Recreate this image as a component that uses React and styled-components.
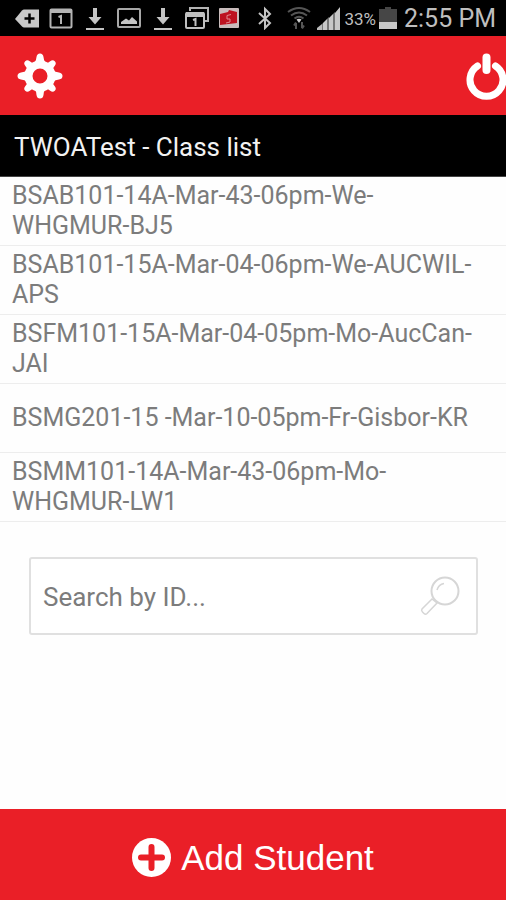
import React from "react";
import styled, { createGlobalStyle } from "styled-components";

const GlobalStyle = createGlobalStyle`
  *, *::before, *::after { box-sizing: border-box; }
  body {
    margin: 0;
    background: #fefefe;
    font-family: Roboto, "Noto Sans", sans-serif;
  }
`;

const Screen = styled.div`
  display: flex;
  flex-direction: column;
  min-height: 100vh;
`;

const StatusBar = styled.div`
  display: flex;
  align-items: center;
  justify-content: space-between;
  height: 36px;
  padding: 0 10px 0 15px;
  background: #000;
  color: #bebebe;
`;

const StatusGroup = styled.div`
  display: flex;
  align-items: center;
  gap: ${(p) => p.$gap}px;
`;

const StatusIcon = styled.svg`
  display: block;
  flex: none;
  width: ${(p) => p.$width || 24}px;
  height: 24px;
`;

const BatteryLevel = styled.span`
  padding-top: 2px;
  font-size: 17px;
`;

const Clock = styled.time`
  padding: 2px 0 0 4px;
  font-size: 25px;
  line-height: 34px;
  white-space: nowrap;
`;

const Toolbar = styled.header`
  display: flex;
  align-items: center;
  justify-content: space-between;
  height: 79px;
  padding-left: 17px;
  background: #ea1f27;
`;

const IconButton = styled.button`
  display: block;
  padding: 0;
  border: 0;
  background: none;
  color: ${(p) => p.$color || "#fff"};
  cursor: pointer;

  svg { display: block; }
`;

const Title = styled.h1`
  margin: 0;
  padding: 4px 14px 0;
  border-bottom: 1px solid #444;
  background: #000;
  color: #f2f2f2;
  font-size: 26px;
  font-weight: 400;
  line-height: 57px;
`;

const ClassList = styled.ul`
  margin: 0;
  padding: 0;
  list-style: none;
`;

const ClassRow = styled.li`
  display: flex;
  align-items: center;
  min-height: 69px;
  padding: 4px 24px 4px 12px;
  border-bottom: 1px solid #ededed;
  color: #7c7c7c;
  font-size: 25px;
  line-height: 30px;
`;

const SearchBox = styled.form`
  display: flex;
  align-items: center;
  height: 78px;
  margin: 35px 28px 0 29px;
  padding: 0 15px 0 12px;
  border: 2px solid #e0e0e0;
  border-radius: 3px;
  background: #fff;
`;

const SearchInput = styled.input`
  flex: 1;
  min-width: 0;
  padding: 2px 0 0;
  border: 0;
  outline: 0;
  background: none;
  color: #7c7c7c;
  font: 26px/36px Roboto, "Noto Sans", sans-serif;

  &::placeholder { color: #7c7c7c; opacity: 1; }
`;

const AddButton = styled.button`
  display: flex;
  align-items: center;
  justify-content: center;
  gap: 10px;
  height: 91px;
  margin-top: auto;
  padding: 6px 0 0;
  border: 0;
  background: #ea1f27;
  color: #fff;
  font: 35px/40px "Liberation Sans", Arial, sans-serif;
  cursor: pointer;
`;

const classes = [
  "BSAB101-14A-Mar-43-06pm-We-WHGMUR-BJ5",
  "BSAB101-15A-Mar-04-06pm-We-AUCWIL-APS",
  "BSFM101-15A-Mar-04-05pm-Mo-AucCan-JAI",
  "BSMG201-15 -Mar-10-05pm-Fr-Gisbor-KR",
  "BSMM101-14A-Mar-43-06pm-Mo-WHGMUR-LW1",
];

const TagIcon = () => (
  <StatusIcon viewBox="0 0 24 24" aria-hidden="true">
    <path d="M0 13 7 4.500Q8 3.500 9 3.500H24V21.500H9Q8 21.500 7 20.500Z" fill="#c8c8c8" />
    <path d="M14.500 7.500V17.500M9.500 12.500H19.500" stroke="#000" strokeWidth="2.500" />
  </StatusIcon>
);

const CalendarIcon = () => (
  <StatusIcon viewBox="0 0 24 24" aria-hidden="true">
    <rect x="1.500" y="3.500" width="21" height="18" rx="1" fill="none" stroke="#b4b4b4" strokeWidth="2" />
    <path d="M1 3H23V7H1Z" fill="#b4b4b4" />
    <path d="M9.500 11 12 10V18" fill="none" stroke="#b4b4b4" strokeWidth="2" />
  </StatusIcon>
);

const DownloadIcon = () => (
  <StatusIcon viewBox="0 0 24 24" aria-hidden="true">
    <path d="M10 2H14V11H18.500L12 18.500 5.500 11H10Z" fill="#c4c4c4" />
    <path d="M3 23H21" stroke="#c4c4c4" strokeWidth="2" />
  </StatusIcon>
);

const PhotoIcon = () => (
  <StatusIcon viewBox="0 0 24 24" aria-hidden="true">
    <rect x="1" y="3" width="22" height="18" rx="1" fill="none" stroke="#a8a8a8" strokeWidth="2" />
    <path d="M4 18V16L9 12.500 12 14.500 15 11 20 15.500V18Z" fill="#c4c4c4" />
  </StatusIcon>
);

const CalendarStackIcon = () => (
  <StatusIcon viewBox="0 0 24 24" aria-hidden="true">
    <path d="M5 5V2H23V15H20" fill="none" stroke="#b4b4b4" strokeWidth="2" />
    <rect x="1" y="7" width="18" height="15" rx="1" fill="none" stroke="#c0c0c0" strokeWidth="2" />
    <path d="M1 6H19V11H1Z" fill="#c0c0c0" />
    <path d="M8 14 10.500 13V20" fill="none" stroke="#c0c0c0" strokeWidth="2" />
  </StatusIcon>
);

const CardIcon = () => (
  <StatusIcon viewBox="0 0 24 24" aria-hidden="true">
    <rect x="0" y="2" width="20" height="20" rx="1" fill="#c9bcbc" />
    <path d="M1 8 9 6 10 4 18 6V17L1 19Z" fill="#bd1220" />
    <path d="M12 8.500 8 9.500V13H11V16L7 17" fill="none" stroke="#e08a90" strokeWidth="1" />
  </StatusIcon>
);

const BluetoothIcon = () => (
  <StatusIcon viewBox="0 0 24 24" aria-hidden="true">
    <path d="M6 7 17 17 12 22V3L17 8 6 18" fill="none" stroke="#c4c4c4" strokeWidth="2" />
  </StatusIcon>
);

const WifiIcon = () => (
  <StatusIcon viewBox="0 0 24 24" aria-hidden="true">
    <g fill="none" stroke="#555" strokeWidth="2">
      <path d="M1 6Q12-2 23 6M4 9.500Q12 3.500 20 9.500M7.500 12.500Q12 9 16.500 12.500" />
      <path d="M9 23V17M7 19.500 9 16.500M15 16V22M17 19.500 15 22.500" />
    </g>
    <path d="M9.500 13.500Q12 12 14.500 13.500L12 17Z" fill="#ccc" />
  </StatusIcon>
);

const SignalIcon = () => (
  <StatusIcon viewBox="0 0 24 24" aria-hidden="true">
    <path d="M0 24V22L5 18V24Z" fill="#bbb" />
    <path d="M6 24V17L10 13V24ZM12 24V12L16 8V24ZM18 24V7L23 1V24Z" fill="#c8c8c8" />
    <path d="M5 18 6 17V24H5ZM10 13 12 11V24H10ZM16 8 18 6V24H16Z" fill="#777" />
  </StatusIcon>
);

const BatteryIcon = () => (
  <StatusIcon $width={18} viewBox="0 0 18 24" aria-hidden="true">
    <path d="M6 1H12V3H18V17H0V3H6Z" fill="#464646" />
    <path d="M0 16H18V23H0Z" fill="#c8c8c8" />
  </StatusIcon>
);

const GearIcon = () => (
  <svg width="46" height="46" viewBox="-23 -23 46 46" aria-hidden="true">
    <circle r="11.500" fill="none" stroke="currentColor" strokeWidth="8" />
    {[0, 45, 90, 135, 180, 225, 270, 315].map((angle) => (
      <path
        key={angle}
        d="M-5.500-13.500Q-3.800-15-3.500-19Q-3-22.500 0-22.500Q3-22.500 3.500-19Q3.800-15 5.500-13.500Z"
        transform={`rotate(${angle}) scale(${angle % 90 ? 0.93 : 1})`}
        fill="currentColor"
      />
    ))}
  </svg>
);

const PowerIcon = () => (
  <svg width="40" height="48" viewBox="0 0 40 48" aria-hidden="true">
    <g fill="none" stroke="currentColor" strokeLinecap="round">
      <path d="M11.500 14A16.500 16.500 0 1 0 29.500 14" strokeWidth="7" />
      <path d="M20.500 5.500V18" strokeWidth="8" />
    </g>
  </svg>
);

const MagnifierIcon = () => (
  <svg width="42" height="42" viewBox="0 0 42 42" aria-hidden="true">
    <g fill="none" stroke="currentColor" strokeWidth="2">
      <circle cx="26" cy="16" r="13.500" />
      <path d="M13 24 3 34Q2 35.500 3.500 37L5 38.500Q6.500 40 8 38.500L18 28Z" strokeWidth="1.500" />
      <path d="M18 15Q19.500 9.500 25 8.500" strokeWidth="1.500" />
    </g>
  </svg>
);

const PlusCircleIcon = () => (
  <svg width="39" height="39" viewBox="0 0 39 39" aria-hidden="true">
    <circle cx="19.500" cy="19.500" r="19.500" fill="#fff" />
    <path d="M19.500 9V30M9 19.500H30" stroke="#ea1f27" strokeWidth="6" strokeLinecap="round" />
  </svg>
);

export default function App() {
  return (
    <Screen>
      <GlobalStyle />
      <StatusBar>
        <StatusGroup $gap={10}>
          <TagIcon />
          <CalendarIcon />
          <DownloadIcon />
          <PhotoIcon />
          <DownloadIcon />
          <CalendarStackIcon />
          <CardIcon />
          <BluetoothIcon />
          <WifiIcon />
        </StatusGroup>
        <StatusGroup $gap={3}>
          <SignalIcon />
          <BatteryLevel>33%</BatteryLevel>
          <BatteryIcon />
          <Clock>2:55 PM</Clock>
        </StatusGroup>
      </StatusBar>
      <Toolbar>
        <IconButton type="button" aria-label="Settings">
          <GearIcon />
        </IconButton>
        <IconButton type="button" aria-label="Log out">
          <PowerIcon />
        </IconButton>
      </Toolbar>
      <Title>TWOATest - Class list</Title>
      <ClassList>
        {classes.map((name) => (
          <ClassRow key={name}>{name}</ClassRow>
        ))}
      </ClassList>
      <SearchBox role="search" onSubmit={(e) => e.preventDefault()}>
        <SearchInput type="text" aria-label="Search by ID" placeholder="Search by ID..." />
        <IconButton type="submit" aria-label="Search" $color="#d6d6d6">
          <MagnifierIcon />
        </IconButton>
      </SearchBox>
      <AddButton type="button">
        <PlusCircleIcon />
        Add Student
      </AddButton>
    </Screen>
  );
}
